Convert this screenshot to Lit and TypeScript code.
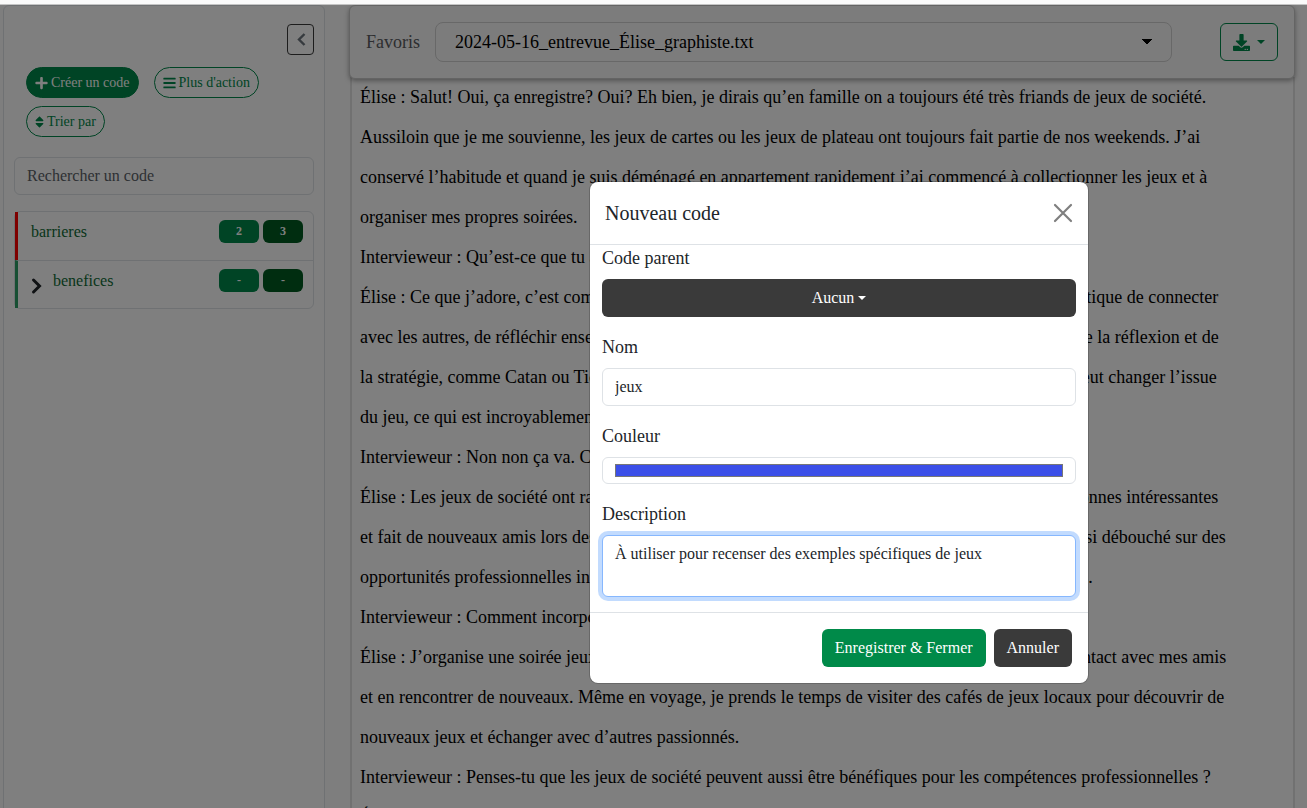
import { LitElement, html, css } from "lit";
import { customElement, state } from "lit/decorators.js";

interface Code {
  name: string;
  color: string;
  files: string;
  refs: string;
  nested: boolean;
}

const CODES: Code[] = [
  { name: "barrieres", color: "#ff0000", files: "2", refs: "3", nested: false },
  { name: "benefices", color: "#2f9e66", files: "-", refs: "-", nested: true },
];

const TRANSCRIPT: string[] = [
  "Élise : Salut! Oui, ça enregistre? Oui? Eh bien, je dirais qu’en famille on a toujours été très friands de jeux de société. Aussiloin que je me souvienne, les jeux de cartes ou les jeux de plateau ont toujours fait partie de nos weekends. J’ai conservé l’habitude et quand je suis déménagé en appartement rapidement j’ai commencé à collectionner les jeux et à organiser mes propres soirées.",
  "Intervieweur : Qu’est-ce que tu aimes dans les jeux de société?",
  "Élise : Ce que j’adore, c’est comment les jeux permettent d’avoir une façon vraiment facile et authentique de connecter avec les autres, de réfléchir ensemble et encore de s’amuser. J’aime surtout les jeux qui demandent de la réflexion et de la stratégie, comme Catan ou Ticket to Ride, où chaque bonne décision que l’on prend à notre tour peut changer l’issue du jeu, ce qui est incroyablement stimulant.",
  "Intervieweur : Non non ça va. Continue.",
  "Élise : Les jeux de société ont rapproché nos familles. J’ai également rencontré énormément de personnes intéressantes et fait de nouveaux amis lors des soirées que je fréquente en ville depuis quelques années. Cela a aussi débouché sur des opportunités professionnelles inattendues, comme des contrats pour illustrer des boîtes de jeux variés.",
  "Intervieweur : Comment incorpores-tu les jeux dans ta vie?",
  "Élise : J’organise une soirée jeux presque chaque semaine. Cela me permet beaucoup de rester en contact avec mes amis et en rencontrer de nouveaux. Même en voyage, je prends le temps de visiter des cafés de jeux locaux pour découvrir de nouveaux jeux et échanger avec d’autres passionnés.",
  "Intervieweur : Penses-tu que les jeux de société peuvent aussi être bénéfiques pour les compétences professionnelles ?",
  "Élise : Oui, absolument.",
];

const plusIcon = html`<svg class="icon" width="13" height="14" viewBox="0 0 448 512" aria-hidden="true"><path fill="currentColor" d="M416 208H272V64c0-17.700-14.300-32-32-32h-32c-17.700 0-32 14.300-32 32v144H32c-17.700 0-32 14.300-32 32v32c0 17.700 14.300 32 32 32h144v144c0 17.700 14.300 32 32 32h32c17.700 0 32-14.300 32-32V304h144c17.700 0 32-14.300 32-32v-32c0-17.700-14.300-32-32-32z"/></svg>`;
const barsIcon = html`<svg class="icon" width="13" height="14" viewBox="0 0 448 512" aria-hidden="true"><path fill="currentColor" d="M16 132h416c8.800 0 16-7.200 16-16V76c0-8.800-7.200-16-16-16H16C7.200 60 0 67.200 0 76v40c0 8.800 7.200 16 16 16zm0 160h416c8.800 0 16-7.200 16-16v-40c0-8.800-7.200-16-16-16H16c-8.800 0-16 7.200-16 16v40c0 8.800 7.200 16 16 16zm0 160h416c8.800 0 16-7.200 16-16v-40c0-8.800-7.200-16-16-16H16c-8.800 0-16 7.200-16 16v40c0 8.800 7.200 16 16 16z"/></svg>`;
const sortIcon = html`<svg class="icon" width="9" height="14" viewBox="0 0 320 512" aria-hidden="true"><path fill="currentColor" d="M41 288h238c21.400 0 32.100 25.900 17 41L177 448c-9.400 9.400-24.600 9.400-33.900 0L24 329c-15.100-15.100-4.400-41 17-41zm255-105L177 64c-9.400-9.400-24.600-9.400-33.900 0L24 183c-15.100 15.100-4.400 41 17 41h238c21.400 0 32.100-25.900 17-41z"/></svg>`;
const leftIcon = html`<svg width="10" height="16" viewBox="0 0 10 16" aria-hidden="true"><path fill="none" stroke="currentColor" stroke-width="2.400" d="M8.500 2 3 7.500 8.500 13"/></svg>`;
const rightIcon = html`<svg width="12" height="18" viewBox="0 0 12 18" aria-hidden="true"><path fill="none" stroke="currentColor" stroke-width="3" stroke-linecap="round" d="M2.500 3l6 6-6 6"/></svg>`;
const downloadIcon = html`<svg width="17" height="17" viewBox="0 0 512 512" aria-hidden="true"><path fill="currentColor" d="M216 0h80c13.300 0 24 10.700 24 24v168h87.700c17.800 0 26.700 21.500 14.100 34.100L269.700 378.300c-7.500 7.500-19.800 7.500-27.300 0L90.100 226.100c-12.600-12.600-3.700-34.100 14.100-34.100H192V24c0-13.300 10.700-24 24-24zm296 376v112c0 13.300-10.700 24-24 24H24c-13.300 0-24-10.700-24-24V376c0-13.300 10.700-24 24-24h146.700l49 49c20.100 20.100 52.500 20.100 72.600 0l49-49H488c13.300 0 24 10.700 24 24zm-124 88c0-11-9-20-20-20s-20 9-20 20 9 20 20 20 20-9 20-20zm64 0c0-11-9-20-20-20s-20 9-20 20 9 20 20 20 20-9 20-20z"/></svg>`;
const closeIcon = html`<svg width="20" height="20" viewBox="0 0 20 20" aria-hidden="true"><path fill="none" stroke="currentColor" stroke-width="2.200" stroke-linecap="round" d="M2 2l16 16M18 2 2 18"/></svg>`;

const base = css`
  *, *::before, *::after { box-sizing: border-box; }
  button, input, select, textarea { font-family: inherit; margin: 0; }
  button { cursor: pointer; }
  svg { display: block; flex: none; }
  .caret {
    width: 0;
    height: 0;
    border: 4px solid transparent;
    border-top-color: currentColor;
    border-bottom: 0;
  }
`;

@customElement("code-sidebar")
class CodeSidebar extends LitElement {
  static styles = [base, css`
    :host {
      display: block;
      border: 1px solid #dee2e6;
      border-radius: 6px;
      background: #ffffff;
      padding: 18px 10px;
    }
    .top { display: flex; justify-content: flex-end; }
    .collapse {
      display: grid;
      place-items: center;
      width: 27px;
      height: 31px;
      padding: 0;
      border: 1px solid #3a3a3a;
      border-radius: 4px;
      background: transparent;
      color: #6c757d;
    }
    .actions {
      display: flex;
      flex-wrap: wrap;
      gap: 8px 15px;
      padding: 12px 12px 20px;
    }
    .pill {
      display: flex;
      align-items: center;
      gap: 3px;
      height: 31px;
      padding: 0 8px;
      border: 1px solid #00884a;
      border-radius: 16px;
      background: transparent;
      color: #00884a;
      font-size: 14px;
    }
    .pill.solid { background: #00884a; color: #ffffff; }
    .search {
      display: block;
      width: 100%;
      height: 38px;
      padding: 6px 12px;
      border: 1px solid #dee2e6;
      border-radius: 6px;
      background: transparent;
      font-size: 16px;
      color: #212529;
    }
    .search::placeholder { color: #5c6268; }
    .list {
      list-style: none;
      margin: 16px 0 0;
      padding: 0;
      border: 1px solid #dee2e6;
      border-radius: 6px;
    }
    .row {
      display: flex;
      align-items: flex-start;
      gap: 4px;
      height: 48px;
      padding: 8px 10px 8px 13px;
      border-left: 3px solid;
    }
    .row + .row { border-top: 1px solid #dee2e6; }
    .toggle {
      display: block;
      width: 18px;
      padding: 8px 0 0;
      border: 0;
      background: none;
      color: #212529;
    }
    .name {
      flex: 1;
      color: #0f6b35;
      font-size: 16px;
      line-height: 24px;
      text-decoration: none;
    }
    .badge {
      width: 40px;
      border-radius: 6px;
      background: #00884a;
      color: #ffffff;
      font-size: 12px;
      font-weight: 700;
      line-height: 23px;
      text-align: center;
    }
    .badge.dark { background: #005a20; }
  `];

  render() {
    return html`
      <div class="top"><button class="collapse" aria-label="Réduire le panneau">${leftIcon}</button></div>
      <div class="actions">
        <button class="pill solid">${plusIcon}<span>Créer un code</span></button>
        <button class="pill">${barsIcon}<span>Plus d'action</span></button>
        <button class="pill">${sortIcon}<span>Trier par</span></button>
      </div>
      <input class="search" type="search" placeholder="Rechercher un code" aria-label="Rechercher un code" />
      <ul class="list">
        ${CODES.map((c) => html`
          <li class="row" style="border-left-color:${c.color}">
            ${c.nested ? html`<button class="toggle" aria-label="Déplier">${rightIcon}</button>` : ""}
            <a class="name" href="#">${c.name}</a>
            <span class="badge">${c.files}</span>
            <span class="badge dark">${c.refs}</span>
          </li>`)}
      </ul>
    `;
  }
}

@customElement("transcript-view")
class TranscriptView extends LitElement {
  static styles = [base, css`
    :host { display: block; }
    .bar {
      display: flex;
      align-items: center;
      height: 74px;
      padding: 0 16px;
      border: 1px solid #c8c8c8;
      border-radius: 6px;
      background: #f8f8f8;
      box-shadow: 0 2px 5px rgba(0, 0, 0, 0.350);
      position: relative;
    }
    .label { color: #5a5c60; font-size: 18px; }
    .file {
      flex: 1;
      min-width: 0;
      height: 40px;
      margin: 0 48px 0 15px;
      padding: 0 19px;
      border: 1px solid #d0d0d0;
      border-radius: 8px;
      background-color: transparent;
      background-image:
        linear-gradient(to top right, transparent 50%, #000000 50%),
        linear-gradient(to bottom right, #000000 50%, transparent 50%);
      background-size: 5px 6px;
      background-repeat: no-repeat;
      background-position: right 24px center, right 19px center;
      appearance: none;
      font-size: 18px;
      color: #000000;
    }
    .download {
      display: flex;
      align-items: center;
      gap: 7px;
      height: 38px;
      padding: 0 12px;
      border: 1px solid #00884a;
      border-radius: 6px;
      background: transparent;
      color: #00884a;
    }
    .text {
      margin: -2px 0 0 1px;
      padding: 0 60px 0 8px;
      border: 2px solid #e2e2e2;
      border-top: 0;
      background: #ffffff;
      color: #000000;
      font-size: 18px;
      line-height: 40px;
    }
    .text p { margin: 0; }
  `];

  render() {
    return html`
      <div class="bar">
        <label class="label" for="file">Favoris</label>
        <select class="file" id="file"><option>2024-05-16_entrevue_Élise_graphiste.txt</option></select>
        <button class="download" aria-label="Télécharger">${downloadIcon}<span class="caret"></span></button>
      </div>
      <div class="text">${TRANSCRIPT.map((p) => html`<p>${p}</p>`)}</div>
    `;
  }
}

@customElement("code-dialog")
class CodeDialog extends LitElement {
  @state() private color = "#3b4fe8";

  static styles = [base, css`
    :host {
      display: block;
      width: 498px;
      border-radius: 8px;
      background: #ffffff;
      color: #212529;
      box-shadow: 0 0 0 1px rgba(0, 0, 0, 0.180);
    }
    .head {
      display: flex;
      align-items: center;
      justify-content: space-between;
      height: 63px;
      padding: 0 15px;
      border-bottom: 1px solid #dee2e6;
    }
    .title { margin: 0; font-size: 20px; font-weight: 400; line-height: 30px; }
    .close { padding: 0; border: 0; background: none; color: #7f7f7f; }
    .body { display: grid; gap: 17px; padding: 0 12px 15px; }
    .field { display: grid; gap: 8px; }
    .field label { font-size: 18px; line-height: 26px; }
    .btn {
      height: 38px;
      padding: 0 13px;
      border: 0;
      border-radius: 6px;
      background: #3a3a3a;
      color: #ffffff;
      font-size: 16px;
    }
    .btn.primary { background: #008a49; }
    .btn.wide { display: flex; align-items: center; justify-content: center; gap: 4px; }
    .control {
      display: block;
      width: 100%;
      height: 38px;
      padding: 6px 12px;
      border: 1px solid #dee2e6;
      border-radius: 6px;
      background: #ffffff;
      color: #212529;
      font-size: 16px;
      line-height: 24px;
      outline: none;
    }
    .control.swatch { height: 27px; }
    .swatch::-webkit-color-swatch-wrapper { padding: 0; }
    .swatch::-webkit-color-swatch { border: 1px solid #777777; border-radius: 0; }
    .control.area {
      height: 62px;
      resize: none;
      border-color: #86b7fe;
      box-shadow: 0 0 0 4px rgba(13, 110, 253, 0.250);
    }
    .foot {
      display: flex;
      justify-content: flex-end;
      gap: 8px;
      padding: 16px;
      border-top: 1px solid #dee2e6;
    }
  `];

  render() {
    return html`
      <div class="head">
        <h5 class="title">Nouveau code</h5>
        <button class="close" aria-label="Fermer">${closeIcon}</button>
      </div>
      <div class="body">
        <div class="field">
          <label for="parent">Code parent</label>
          <button class="btn wide" id="parent"><span>Aucun</span><span class="caret"></span></button>
        </div>
        <div class="field">
          <label for="nom">Nom</label>
          <input class="control" id="nom" type="text" .value=${"jeux"} />
        </div>
        <div class="field">
          <label for="couleur">Couleur</label>
          <input class="control swatch" id="couleur" type="color" .value=${this.color}
            @input=${(e: Event) => { this.color = (e.target as HTMLInputElement).value; }} />
        </div>
        <div class="field">
          <label for="description">Description</label>
          <textarea class="control area" id="description" .value=${"À utiliser pour recenser des exemples spécifiques de jeux"}></textarea>
        </div>
      </div>
      <div class="foot">
        <button class="btn primary">Enregistrer &amp; Fermer</button>
        <button class="btn">Annuler</button>
      </div>
    `;
  }
}

@customElement("app-root")
class AppRoot extends LitElement {
  static styles = [base, css`
    :host {
      display: flex;
      flex-direction: column;
      height: 100vh;
      overflow: hidden;
      position: relative;
      background: #fafafa;
      font-family: "Liberation Serif", "Times New Roman", serif;
    }
    .strip { flex: none; height: 5px; border-bottom: 1px solid #c4c4c4; }
    .page {
      flex: 1;
      min-height: 0;
      display: grid;
      grid-template-columns: 322px minmax(0, 1fr);
      gap: 24px;
      padding: 0 12px 0 3px;
      overflow: hidden;
      position: relative;
      background: #fcfcfc;
    }
    .backdrop {
      position: absolute;
      inset: 0;
      display: flex;
      justify-content: center;
      align-items: flex-start;
      padding: 177px 0 0 371px;
      background: rgba(0, 0, 0, 0.500);
    }
  `];

  render() {
    return html`
      <div class="strip"></div>
      <main class="page">
        <code-sidebar></code-sidebar>
        <transcript-view></transcript-view>
        <div class="backdrop"><code-dialog role="dialog" aria-label="Nouveau code"></code-dialog></div>
      </main>
    `;
  }
}
